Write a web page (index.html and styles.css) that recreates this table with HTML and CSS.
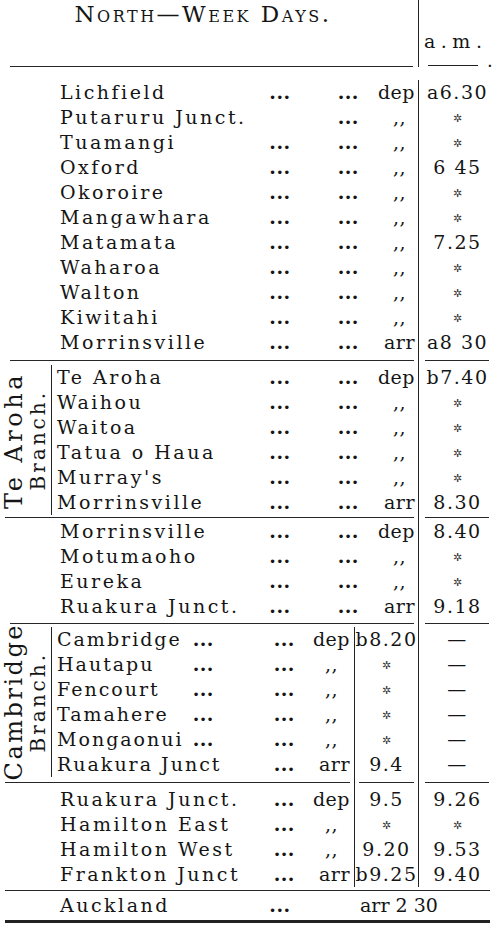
FILE: index.html
```html
<!DOCTYPE html>
<html lang="en">
<head>
<meta charset="utf-8">
<title>North — Week Days</title>
<link rel="stylesheet" href="styles.css">
</head>
<body>
<div class="sheet">
  <div class="head">
    <div class="head-main">
      <div class="title">North—Week Days.</div>
      <div class="head-rule"><div class="ln"></div></div>
    </div>
    <div class="head-time">
      <div class="ampm">a.m.</div>
      <div class="ampm-rule"><span class="dash"></span><span class="pt">.</span></div>
    </div>
  </div>

  <div class="sec main first">
    <div class="rows">
      <div class="row"><span class="nm">Lichfield</span><span class="d1">...</span><span class="d2">...</span><span class="mk">dep</span><span class="t">a6.30</span></div>
      <div class="row"><span class="nm">Putaruru Junct.</span><span class="d1"></span><span class="d2">...</span><span class="mk dit">,,</span><span class="t"><span class="ns">✲</span></span></div>
      <div class="row"><span class="nm">Tuamangi</span><span class="d1">...</span><span class="d2">...</span><span class="mk dit">,,</span><span class="t"><span class="ns">✲</span></span></div>
      <div class="row"><span class="nm">Oxford</span><span class="d1">...</span><span class="d2">...</span><span class="mk dit">,,</span><span class="t">6 45</span></div>
      <div class="row"><span class="nm">Okoroire</span><span class="d1">...</span><span class="d2">...</span><span class="mk dit">,,</span><span class="t"><span class="ns">✲</span></span></div>
      <div class="row"><span class="nm">Mangawhara</span><span class="d1">...</span><span class="d2">...</span><span class="mk dit">,,</span><span class="t"><span class="ns">✲</span></span></div>
      <div class="row"><span class="nm">Matamata</span><span class="d1">...</span><span class="d2">...</span><span class="mk dit">,,</span><span class="t">7.25</span></div>
      <div class="row"><span class="nm">Waharoa</span><span class="d1">...</span><span class="d2">...</span><span class="mk dit">,,</span><span class="t"><span class="ns">✲</span></span></div>
      <div class="row"><span class="nm">Walton</span><span class="d1">...</span><span class="d2">...</span><span class="mk dit">,,</span><span class="t"><span class="ns">✲</span></span></div>
      <div class="row"><span class="nm">Kiwitahi</span><span class="d1">...</span><span class="d2">...</span><span class="mk dit">,,</span><span class="t"><span class="ns">✲</span></span></div>
      <div class="row"><span class="nm">Morrinsville</span><span class="d1">...</span><span class="d2">...</span><span class="mk">arr</span><span class="t">a8 30</span></div>
    </div>
  </div>

  <div class="sep sep1"><div class="l"><div class="ln"></div></div><div class="r"><div class="ln"></div></div></div>

  <div class="sec main">
    <div class="lab">
      <span class="big">Te Aroha</span>
      <span class="small">Branch.</span>
    </div>
    <div class="rows">
      <div class="row"><span class="nm">Te Aroha</span><span class="d1">...</span><span class="d2">...</span><span class="mk">dep</span><span class="t">b7.40</span></div>
      <div class="row"><span class="nm">Waihou</span><span class="d1">...</span><span class="d2">...</span><span class="mk dit">,,</span><span class="t"><span class="ns">✲</span></span></div>
      <div class="row"><span class="nm">Waitoa</span><span class="d1">...</span><span class="d2">...</span><span class="mk dit">,,</span><span class="t"><span class="ns">✲</span></span></div>
      <div class="row"><span class="nm">Tatua o Haua</span><span class="d1">...</span><span class="d2">...</span><span class="mk dit">,,</span><span class="t"><span class="ns">✲</span></span></div>
      <div class="row"><span class="nm">Murray's</span><span class="d1">...</span><span class="d2">...</span><span class="mk dit">,,</span><span class="t"><span class="ns">✲</span></span></div>
      <div class="row"><span class="nm">Morrinsville</span><span class="d1">...</span><span class="d2">...</span><span class="mk">arr</span><span class="t">8.30</span></div>
    </div>
  </div>

  <div class="sep sep2"><div class="l"><div class="ln"></div></div><div class="r"><div class="ln"></div></div></div>

  <div class="sec main">
    <div class="rows">
      <div class="row"><span class="nm">Morrinsville</span><span class="d1">...</span><span class="d2">...</span><span class="mk">dep</span><span class="t">8.40</span></div>
      <div class="row"><span class="nm">Motumaoho</span><span class="d1">...</span><span class="d2">...</span><span class="mk dit">,,</span><span class="t"><span class="ns">✲</span></span></div>
      <div class="row"><span class="nm">Eureka</span><span class="d1">...</span><span class="d2">...</span><span class="mk dit">,,</span><span class="t"><span class="ns">✲</span></span></div>
      <div class="row"><span class="nm">Ruakura Junct.</span><span class="d1">...</span><span class="d2">...</span><span class="mk">arr</span><span class="t">9.18</span></div>
    </div>
  </div>

  <div class="sep sep3"><div class="l"><div class="ln"></div></div><div class="r"><div class="ln"></div></div></div>

  <div class="sec cam">
    <div class="lab">
      <span class="big">Cambridge</span>
      <span class="small">Branch.</span>
    </div>
    <div class="rows">
      <div class="row"><span class="nm">Cambridge</span><span class="d1">...</span><span class="d2">...</span><span class="mk">dep</span><span class="t">b8.20</span><span class="t">—</span></div>
      <div class="row"><span class="nm">Hautapu</span><span class="d1">...</span><span class="d2">...</span><span class="mk dit">,,</span><span class="t"><span class="ns">✲</span></span><span class="t">—</span></div>
      <div class="row"><span class="nm">Fencourt</span><span class="d1">...</span><span class="d2">...</span><span class="mk dit">,,</span><span class="t"><span class="ns">✲</span></span><span class="t">—</span></div>
      <div class="row"><span class="nm">Tamahere</span><span class="d1">...</span><span class="d2">...</span><span class="mk dit">,,</span><span class="t"><span class="ns">✲</span></span><span class="t">—</span></div>
      <div class="row"><span class="nm">Mongaonui</span><span class="d1">...</span><span class="d2">...</span><span class="mk dit">,,</span><span class="t"><span class="ns">✲</span></span><span class="t">—</span></div>
      <div class="row"><span class="nm">Ruakura Junct</span><span class="d1"></span><span class="d2">...</span><span class="mk">arr</span><span class="t">9.4</span><span class="t">—</span></div>
    </div>
  </div>

  <div class="sep sep4"><div class="l"><div class="ln"></div></div><div class="m"><div class="ln"></div></div><div class="r"><div class="ln"></div></div></div>

  <div class="sec cam">
    <div class="rows">
      <div class="row"><span class="nm wide">Ruakura Junct.</span><span class="d2">...</span><span class="mk">dep</span><span class="t">9.5</span><span class="t">9.26</span></div>
      <div class="row"><span class="nm wide">Hamilton East</span><span class="d2">...</span><span class="mk dit">,,</span><span class="t"><span class="ns">✲</span></span><span class="t"><span class="ns">✲</span></span></div>
      <div class="row"><span class="nm wide">Hamilton West</span><span class="d2">...</span><span class="mk dit">,,</span><span class="t">9.20</span><span class="t">9.53</span></div>
      <div class="row"><span class="nm wide">Frankton Junct</span><span class="d2">...</span><span class="mk">arr</span><span class="t">b9.25</span><span class="t">9.40</span></div>
    </div>
  </div>

  <div class="sep sep5"><div class="l"><div class="ln"></div></div></div>

  <div class="final">
    <span class="nm">Auckland</span><span class="d1">...</span><span class="arr">arr 2 30</span>
  </div>
  <div class="end"></div>
</div>
</body>
</html>
```

FILE: styles.css
```css
* { box-sizing: border-box; }

html, body {
  margin: 0;
  padding: 0;
  background: #ffffff;
}

body {
  font-family: "DejaVu Serif", "Liberation Serif", serif;
  color: #151515;
}

.sheet {
  width: 496px;
  height: 926px;
  overflow: hidden;
}

/* ---------- header ---------- */
.head {
  display: flex;
  height: 67px;
}

.head-main {
  flex: 1;
  display: flex;
  flex-direction: column;
  justify-content: space-between;
}

.title {
  font-size: 23px;
  line-height: 28px;
  font-variant: small-caps;
  letter-spacing: 2.5px;
  text-align: center;
  padding-right: 12px;
}

.head-rule {
  padding: 0 5px 0 10px;
}

.head-time {
  width: 78px;
  border-left: 1.5px solid #222;
  display: flex;
  flex-direction: column;
  justify-content: space-between;
  padding: 30px 0 0 5px;
}

.ampm {
  font-size: 19px;
  line-height: 22px;
  letter-spacing: 5.5px;
}

.ampm-rule {
  display: flex;
  align-items: flex-end;
  height: 10px;
  padding-bottom: 1px;
}

.ampm-rule .dash {
  width: 50px;
  margin-left: 4px;
  border-top: 1.5px solid #222;
}

.ampm-rule .pt {
  font-size: 18px;
  line-height: 10px;
  margin-left: 9px;
}

.ln {
  width: 100%;
  height: 0;
  border-top: 1.5px solid #262626;
}

/* ---------- sections ---------- */
.sec {
  display: flex;
}

.sec.first {
  margin-top: 13px;
}

.rows {
  flex: 1;
  min-width: 0;
}

.row {
  display: grid;
  height: 25px;
  line-height: 25px;
  font-size: 19px;
  white-space: nowrap;
}

.main .row {
  grid-template-columns: minmax(0, 1fr) 36px 70px 50px 78px;
}

.cam .row {
  grid-template-columns: minmax(0, 1fr) 36px 82px 54px 64px 78px;
}

.nm {
  min-width: 0;
  padding-left: 60px;
  letter-spacing: 2.5px;
  overflow: visible;
}

.lab + .rows .nm {
  padding-left: 5px;
}

.cam .lab + .rows .nm {
  letter-spacing: 2px;
}

.nm.wide {
  grid-column: span 2;
}

.d1,
.d2 {
  font-weight: bold;
  letter-spacing: 0.5px;
}

.d1 {
  text-align: center;
}

.cam .d1 {
  text-align: right;
  padding-right: 4px;
}

.main .d2 {
  text-align: right;
  padding-right: 9px;
}

.cam .d2 {
  text-align: right;
  padding-right: 5px;
}

.mk {
  text-align: right;
  padding-right: 3px;
  letter-spacing: 0.5px;
}

.main .mk.dit {
  padding-right: 12px;
}

.cam .mk {
  padding-right: 4px;
}

.cam .mk.dit {
  padding-right: 16px;
}

.t {
  border-left: 1.5px solid #222;
  text-align: center;
  letter-spacing: 1.5px;
}

.ns {
  font-family: "DejaVu Sans", sans-serif;
  font-size: 11px;
  color: #333;
  vertical-align: 2px;
  letter-spacing: 0;
}

/* ---------- rotated branch labels ---------- */
.lab {
  width: 52px;
  height: 150px;
  flex: none;
  border-right: 1.5px solid #222;
  display: flex;
  justify-content: center;
  align-items: center;
  padding-right: 1px;
  overflow: visible;
}

.lab .big,
.lab .small {
  writing-mode: vertical-rl;
  transform: rotate(180deg);
  white-space: nowrap;
}

.lab .big {
  font-size: 24px;
  line-height: 25px;
  letter-spacing: 3.5px;
}

.lab .small {
  font-size: 20px;
  line-height: 22px;
  letter-spacing: 3px;
}

.cam .lab .big {
  letter-spacing: 2.5px;
}

/* ---------- separators ---------- */
.sep {
  display: flex;
}

.sep .l,
.sep .m,
.sep .r {
  display: flex;
  align-items: center;
}

.sep .l {
  flex: 1;
  padding: 0 4px 0 10px;
}

.sep .m {
  width: 64px;
  border-left: 1.5px solid #222;
  padding: 0 4px;
}

.sep .r {
  width: 78px;
  border-left: 1.5px solid #222;
  padding: 0 7px 0 6px;
}

.sep1 { height: 10px; }
.sep2 { height: 4px; }
.sep2 .l { padding-left: 5px; }
.sep3 { height: 8px; }
.sep4 { height: 10px; }
.sep4 .l { padding: 0 4px 0 5px; }
.sep5 { height: 6px; }
.sep5 .l { padding: 0 6px 0 5px; }

/* ---------- final row ---------- */
.final {
  display: grid;
  grid-template-columns: 262px 36px minmax(0, 1fr);
  height: 25px;
  line-height: 25px;
  font-size: 19px;
  white-space: nowrap;
}

.final .arr {
  padding-left: 62px;
}

.end {
  margin: 2px 6px 0 5px;
  border-top: 3px solid #222;
}
```
